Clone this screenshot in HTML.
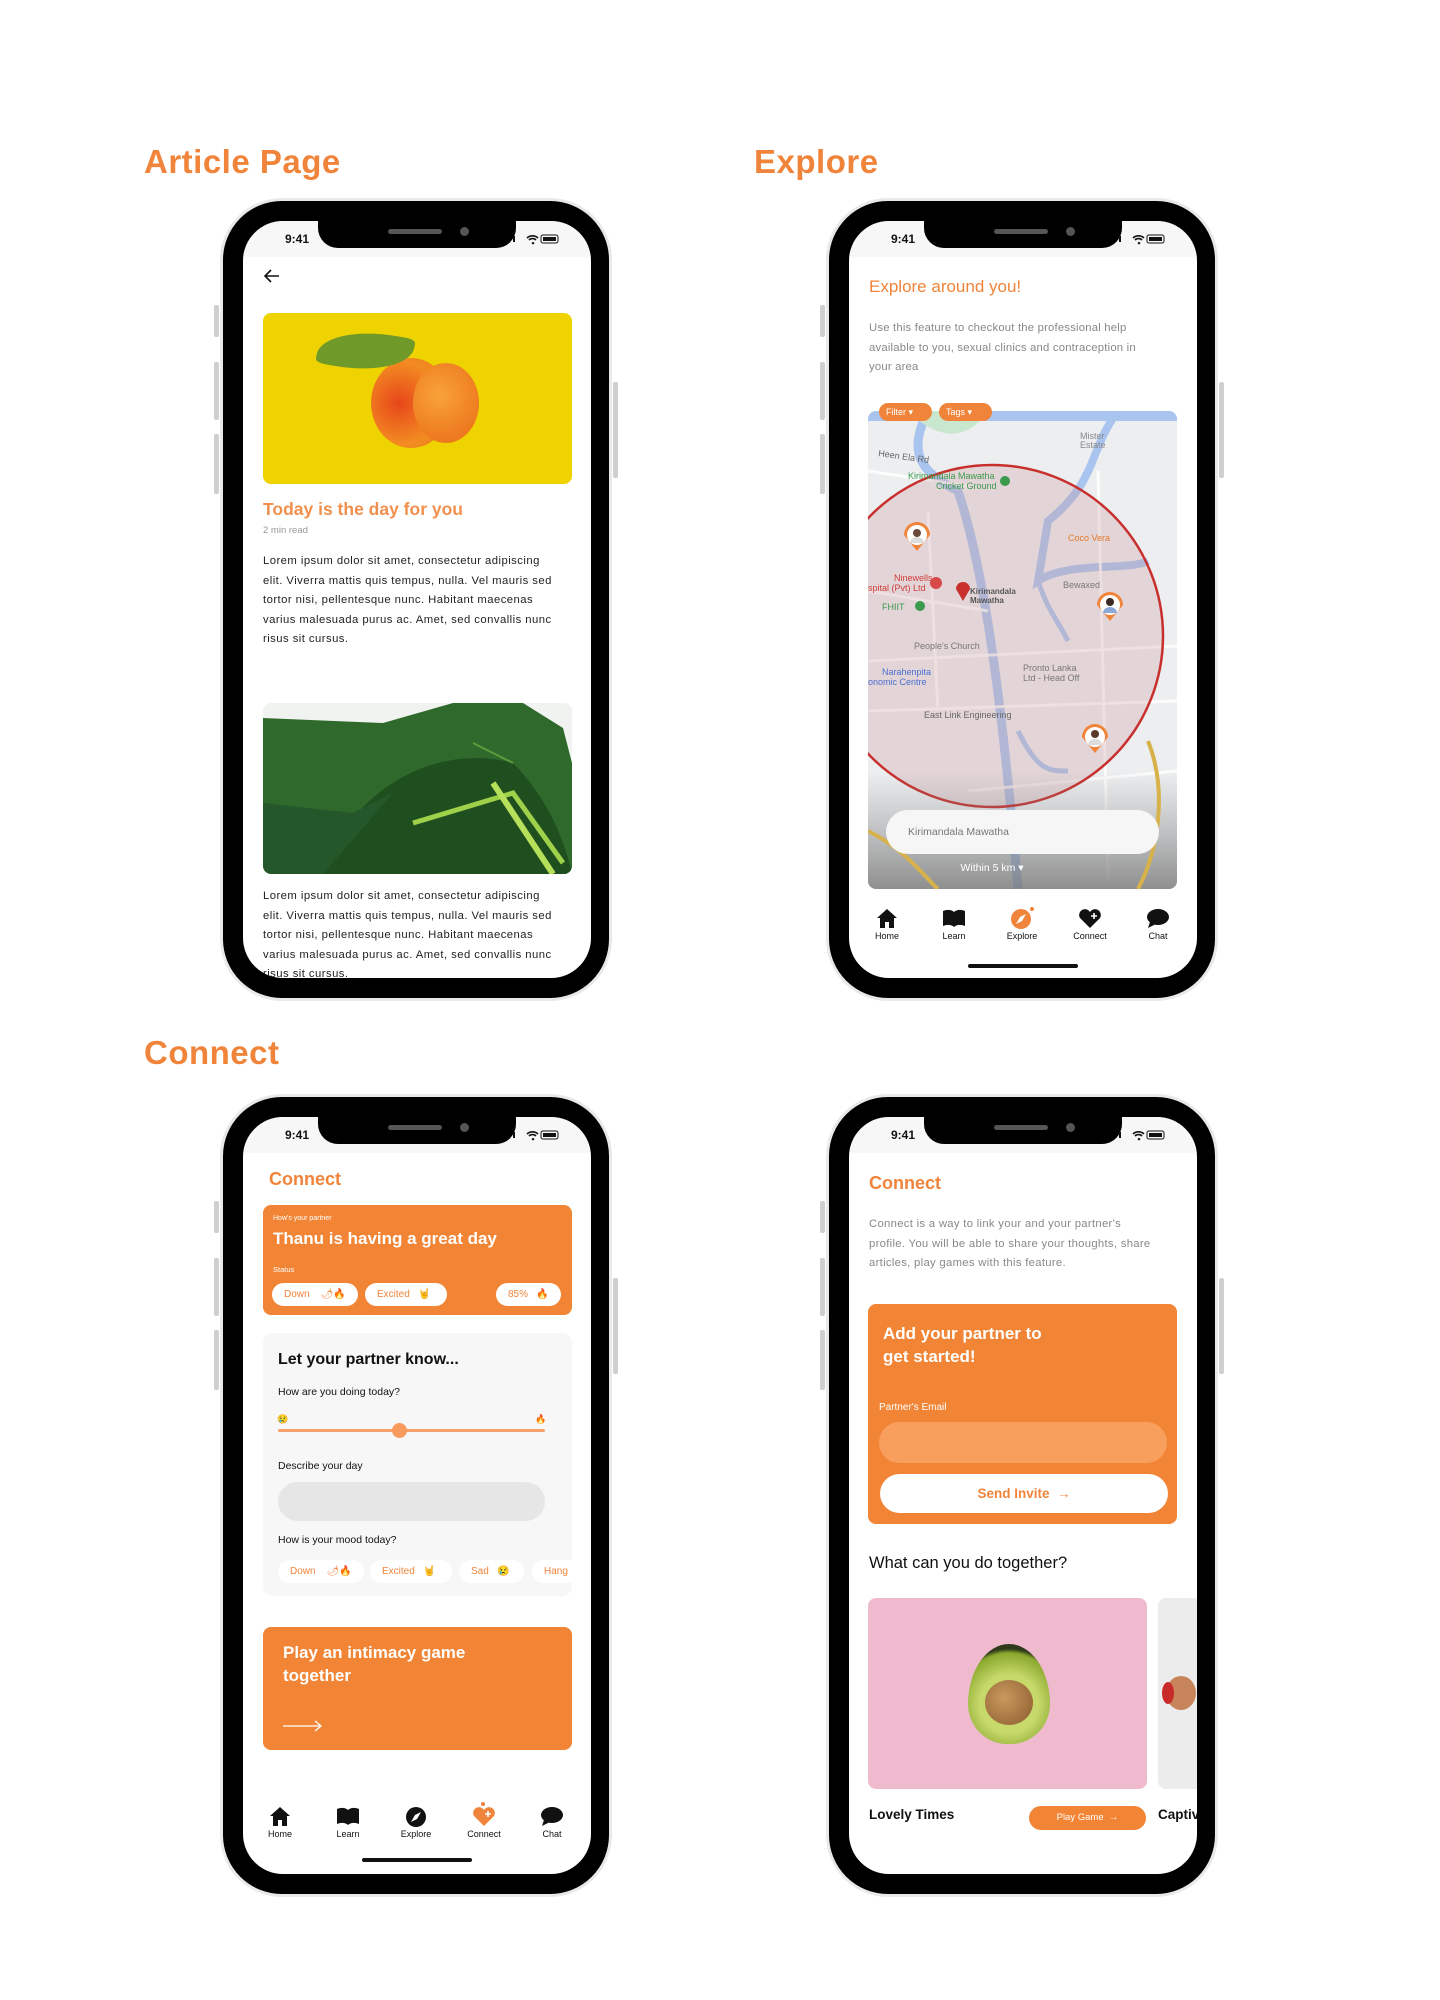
<!DOCTYPE html>
<html><head><meta charset="utf-8">
<style>
*{margin:0;padding:0;box-sizing:border-box}
body{width:1440px;height:2000px;background:#fff;position:relative;overflow:hidden;font-family:"Liberation Sans",sans-serif;color:#111}
.h{position:absolute;color:#F0843A;font-weight:700;font-size:33px;letter-spacing:0.5px}
.ph{position:absolute;width:392px;height:803px;border-radius:62px;background:#000;border:3px solid #e9e9e9}
.btn{position:absolute;background:#cfcfcf;width:5px;border-radius:2px}
.scr{position:absolute;width:348px;height:757px;border-radius:40px;background:#fff;overflow:hidden}
.sb{position:absolute;left:0;top:0;width:348px;height:36px;background:#f7f7f7}
.notch{position:absolute;left:75px;top:0;width:198px;height:27px;background:#000;border-radius:0 0 20px 20px}
.spk{position:absolute;left:70px;top:8px;width:54px;height:5px;border-radius:3px;background:#555}
.cam{position:absolute;left:142px;top:6px;width:9px;height:9px;border-radius:50%;background:#555}
.time{position:absolute;left:42px;top:11px;font-size:12px;font-weight:700}
.ab{position:absolute}
.or{color:#F0843A}
.p{font-size:11.3px;line-height:19.5px;color:#222;white-space:nowrap;letter-spacing:0.45px}
.tab{position:absolute;width:60px;text-align:center;font-size:9px;color:#111}
.tab svg{display:block;margin:0 auto 2px}
.hi{position:absolute;height:4px;background:#111;border-radius:2px}
.pill{position:absolute;background:#fff;border-radius:12px;color:#F0843A;font-size:10px;line-height:23px;padding-left:12px}
</style></head><body>

<div class="h" style="left:144px;top:143px">Article Page</div>
<div class="h" style="left:754px;top:143px">Explore</div>
<div class="h" style="left:144px;top:1034px">Connect</div>

<!-- PHONE 1 -->
<div class="btn" style="left:214px;top:305px;height:32px"></div>
<div class="btn" style="left:214px;top:362px;height:58px"></div>
<div class="btn" style="left:214px;top:434px;height:60px"></div>
<div class="btn" style="left:613px;top:382px;height:96px"></div>
<div class="ph" style="left:220px;top:198px"></div>
<div class="scr" style="left:243px;top:221px">
 <div class="sb"></div>
 <div class="time">9:41</div>
 <div class="notch"><div class="spk"></div><div class="cam"></div></div>
 <svg class="ab" style="left:270px;top:12px" width="50" height="12"><rect x="0" y="3" width="2" height="6" fill="#111"/><path d="M14 5a8 8 0 0 1 11 0M16 7a5 5 0 0 1 7 0M19 9.5l1 1 1-1" stroke="#111" stroke-width="1.6" fill="none"/><rect x="28" y="2" width="17" height="8" rx="2" stroke="#111" fill="none"/><rect x="30" y="4" width="13" height="4" fill="#111"/></svg>
 <svg class="ab" style="left:21px;top:48px" width="16" height="14"><path d="M15 7H2M7 1L1 7l6 6" stroke="#111" stroke-width="1.6" fill="none"/></svg>
 <div class="ab" style="left:20px;top:92px;width:309px;height:171px;background:#EED300;border-radius:8px;overflow:hidden">
  <div class="ab" style="left:108px;top:45px;width:80px;height:90px;border-radius:50%;background:radial-gradient(circle at 35% 50%,#e7461a,#f38b22 60%,#e57a1c)"></div>
  <div class="ab" style="left:150px;top:50px;width:66px;height:80px;border-radius:50%;background:radial-gradient(circle at 40% 40%,#f8a33a,#ee7a1f 70%)"></div>
  <div class="ab" style="left:55px;top:18px;width:95px;height:40px;background:#6f9a2a;border-radius:80% 10% 80% 10%;transform:rotate(10deg)"></div>
 </div>
 <div class="ab or" style="left:20px;top:278px;font-size:17.5px;font-weight:700;opacity:.9">Today is the day for you</div>
 <div class="ab" style="left:20px;top:304px;font-size:9.5px;color:#999">2 min read</div>
 <div class="ab p" style="left:20px;top:331px">Lorem ipsum dolor sit amet, consectetur adipiscing<br>elit. Viverra mattis quis tempus, nulla. Vel mauris sed<br>tortor nisi, pellentesque nunc. Habitant maecenas<br>varius malesuada purus ac. Amet, sed convallis nunc<br>risus sit cursus.</div>
 <div class="ab" style="left:20px;top:482px;width:309px;height:171px;background:#f1f3f1;border-radius:8px;overflow:hidden">
  <svg width="309" height="171"><path d="M0 15 L120 20 L190 0 L260 0 L300 25 L309 60 L309 171 L40 171 L0 160Z" fill="#2f6a2c"/><path d="M60 171 C90 80 180 40 250 60 C280 90 300 130 309 171Z" fill="#1f4f1f"/><path d="M0 100 L90 110 L130 90 L60 171 L0 171Z" fill="#24572a"/><path d="M150 120 L250 90 L300 160" stroke="#9fd04a" stroke-width="5" fill="none"/><path d="M230 80 L290 171" stroke="#b6e05a" stroke-width="6" fill="none"/><path d="M210 40 L250 60" stroke="#5c9a3a" stroke-width="2" fill="none"/></svg>
 </div>
 <div class="ab p" style="left:20px;top:666px">Lorem ipsum dolor sit amet, consectetur adipiscing<br>elit. Viverra mattis quis tempus, nulla. Vel mauris sed<br>tortor nisi, pellentesque nunc. Habitant maecenas<br>varius malesuada purus ac. Amet, sed convallis nunc<br>risus sit cursus.</div>
</div>

<!-- PHONE 2 -->
<div class="btn" style="left:820px;top:305px;height:32px"></div>
<div class="btn" style="left:820px;top:362px;height:58px"></div>
<div class="btn" style="left:820px;top:434px;height:60px"></div>
<div class="btn" style="left:1219px;top:382px;height:96px"></div>
<div class="ph" style="left:826px;top:198px"></div>
<div class="scr" style="left:849px;top:221px">
 <div class="sb"></div>
 <div class="time">9:41</div>
 <div class="notch"><div class="spk"></div><div class="cam"></div></div>
 <svg class="ab" style="left:270px;top:12px" width="50" height="12"><rect x="0" y="3" width="2" height="6" fill="#111"/><path d="M14 5a8 8 0 0 1 11 0M16 7a5 5 0 0 1 7 0M19 9.5l1 1 1-1" stroke="#111" stroke-width="1.6" fill="none"/><rect x="28" y="2" width="17" height="8" rx="2" stroke="#111" fill="none"/><rect x="30" y="4" width="13" height="4" fill="#111"/></svg>
 <div class="ab or" style="left:20px;top:56px;font-size:17px">Explore around you!</div>
 <div class="ab" style="left:20px;top:98px;font-size:11.3px;line-height:19.5px;color:#888;white-space:nowrap;letter-spacing:0.2px">Use this feature to checkout the professional help<br>available to you, sexual clinics and contraception in<br>your area</div>
 <div class="ab" style="left:19px;top:190px;width:309px;height:478px;border-radius:8px;overflow:hidden;background:#eceef0">
  <svg width="309" height="478" font-family="Liberation Sans" font-size="9">
   <path d="M60 0 C40 40 50 60 90 80 C110 140 130 240 150 478" stroke="#a9c4ef" stroke-width="9" fill="none"/>
   <path d="M150 0 L250 0 C220 40 230 70 180 110 L170 170 C200 150 260 160 280 150" stroke="#a9c4ef" stroke-width="8" fill="none"/>
   <path d="M0 0 H309 V10 H0Z" fill="#a9c4ef"/>
   <path d="M40 0 C70 30 100 30 120 0Z" fill="#c9e6cf"/>
   <path d="M170 170 C180 200 190 210 200 230 M150 320 C170 360 180 360 200 360" stroke="#a9c4ef" stroke-width="5" fill="none"/>
   <g stroke="#fff" stroke-width="3" fill="none" opacity=".8"><path d="M0 60 L100 75"/><path d="M0 250 L309 235"/><path d="M0 180 L120 200"/><path d="M60 100 L70 300"/><path d="M0 300 L309 290"/><path d="M230 60 L240 470"/><path d="M100 380 L309 360"/></g>
   <circle cx="124" cy="225" r="171" fill="rgba(205,150,150,0.28)" stroke="#c8302e" stroke-width="2.5"/>
   <rect x="0" y="360" width="309" height="118" fill="url(#g)"/>
   <defs><linearGradient id="g" x1="0" y1="0" x2="0" y2="1"><stop offset="0" stop-color="#888" stop-opacity="0"/><stop offset="1" stop-color="#777" stop-opacity=".8"/></linearGradient></defs>
   <path d="M0 420 C40 440 60 470 70 478 M280 330 C300 380 290 440 270 478" stroke="#d7b24a" stroke-width="4" fill="none"/>
   <text x="10" y="45" fill="#666" transform="rotate(8 10 45)">Heen Ela Rd</text>
   <text x="40" y="68" fill="#3b9a4c">Kirimandala Mawatha</text><text x="68" y="78" fill="#3b9a4c">Cricket Ground</text>
   <circle cx="137" cy="70" r="5" fill="#3b9a4c"/>
   <text x="212" y="28" fill="#888">Mister</text><text x="212" y="37" fill="#888">Estate</text>
   <text x="200" y="130" fill="#e07a2a">Coco Vera</text>
   <text x="26" y="170" fill="#d03b3b">Ninewells</text><text x="0" y="180" fill="#d03b3b">spital (Pvt) Ltd</text>
   <circle cx="68" cy="172" r="6" fill="#d84a4a"/>
   <path d="M88 178 a7 7 0 1 1 14 0 l-7 12z" fill="#c8302e"/>
   <text x="102" y="183" fill="#555" font-weight="bold" font-size="8">Kirimandala</text><text x="102" y="192" fill="#555" font-weight="bold" font-size="8">Mawatha</text>
   <text x="14" y="199" fill="#3b9a4c">FHIIT</text><circle cx="52" cy="195" r="5" fill="#3b9a4c"/>
   <text x="46" y="238" fill="#777">People's Church</text>
   <text x="14" y="264" fill="#4a6fd0">Narahenpita</text><text x="0" y="274" fill="#4a6fd0">onomic Centre</text>
   <text x="155" y="260" fill="#777">Pronto Lanka</text><text x="155" y="270" fill="#777">Ltd - Head Off</text>
   <text x="195" y="177" fill="#777">Bewaxed</text>
   <text x="56" y="307" fill="#666">East Link Engineering</text>
   <g><path d="M36 124 a13 13 0 1 1 26 0 l-13 16z" fill="#F0843A"/><circle cx="49" cy="124" r="10" fill="#fff"/><circle cx="49" cy="122" r="4" fill="#6b4a3a"/><path d="M42 132 a7 6 0 0 1 14 0z" fill="#ddd"/></g>
   <g><path d="M229 194 a13 13 0 1 1 26 0 l-13 16z" fill="#F0843A"/><circle cx="242" cy="194" r="10" fill="#fff"/><circle cx="242" cy="191" r="4" fill="#3a2a22"/><path d="M235 202 a7 6 0 0 1 14 0z" fill="#8aa8d8"/></g>
   <g><path d="M214 326 a13 13 0 1 1 26 0 l-13 16z" fill="#F0843A"/><circle cx="227" cy="326" r="10" fill="#fff"/><circle cx="227" cy="323" r="4" fill="#5a3a2a"/><path d="M220 334 a7 6 0 0 1 14 0z" fill="#ddd"/></g>
  </svg>
  <div class="ab" style="left:18px;top:399px;width:273px;height:44px;background:#f6f6f6;border-radius:22px;font-size:10.5px;color:#777;line-height:44px;padding-left:22px">Kirimandala Mawatha</div>
  <div class="ab" style="left:0;top:451px;width:248px;text-align:center;font-size:10.5px;color:#fff">Within 5 km ▾</div>
 </div>
 <div class="ab" style="left:30px;top:182px;width:53px;height:18px;background:#F0843A;border-radius:9px;color:#fff;font-size:9px;line-height:18px;padding-left:7px">Filter ▾</div>
 <div class="ab" style="left:90px;top:182px;width:53px;height:18px;background:#F0843A;border-radius:9px;color:#fff;font-size:9px;line-height:18px;padding-left:7px">Tags ▾</div>
 <div class="tab" style="left:8px;top:686px"><svg width="26" height="22"><path d="M3 11 L13 2 L23 11 H20 V21 H15 V15 H11 V21 H6 V11Z" fill="#111"/></svg>Home</div>
 <div class="tab" style="left:75px;top:686px"><svg width="26" height="22"><path d="M2 4 C7 2 11 3 13 5 C15 3 19 2 24 4 V19 C19 17 15 18 13 20 C11 18 7 17 2 19Z" fill="#111"/></svg>Learn</div>
 <div class="tab or" style="left:143px;top:686px"><svg width="26" height="22"><circle cx="12" cy="12" r="10" fill="#F0843A"/><path d="M7 17 L11 10 L17 7 L13 14Z" fill="#fff"/><circle cx="23" cy="2" r="2" fill="#F0843A"/></svg>Explore</div>
 <div class="tab" style="left:211px;top:686px"><svg width="26" height="22"><path d="M13 21 L3 11 A5 5 0 0 1 13 5 A5 5 0 0 1 23 11Z" fill="#111"/><path d="M17 6v6M14 9h6" stroke="#fff" stroke-width="1.6"/></svg>Connect</div>
 <div class="tab" style="left:279px;top:686px"><svg width="26" height="22"><ellipse cx="13" cy="10" rx="11" ry="8" fill="#111"/><path d="M5 15 L3 21 L11 17Z" fill="#111"/></svg>Chat</div>
 <div class="hi" style="left:119px;top:743px;width:110px"></div>
</div>

<!-- PHONE 3 -->
<div class="btn" style="left:214px;top:1201px;height:32px"></div>
<div class="btn" style="left:214px;top:1258px;height:58px"></div>
<div class="btn" style="left:214px;top:1330px;height:60px"></div>
<div class="btn" style="left:613px;top:1278px;height:96px"></div>
<div class="ph" style="left:220px;top:1094px"></div>
<div class="scr" style="left:243px;top:1117px">
 <div class="sb"></div>
 <div class="time">9:41</div>
 <div class="notch"><div class="spk"></div><div class="cam"></div></div>
 <svg class="ab" style="left:270px;top:12px" width="50" height="12"><rect x="0" y="3" width="2" height="6" fill="#111"/><path d="M14 5a8 8 0 0 1 11 0M16 7a5 5 0 0 1 7 0M19 9.5l1 1 1-1" stroke="#111" stroke-width="1.6" fill="none"/><rect x="28" y="2" width="17" height="8" rx="2" stroke="#111" fill="none"/><rect x="30" y="4" width="13" height="4" fill="#111"/></svg>
 <div class="ab or" style="left:26px;top:52px;font-size:18px;font-weight:700">Connect</div>
 <div class="ab" style="left:20px;top:88px;width:309px;height:110px;background:#F18535;border-radius:8px;color:#fff">
  <div class="ab" style="left:10px;top:10px;font-size:7px">How's your partner</div>
  <div class="ab" style="left:10px;top:24px;font-size:17px;font-weight:700">Thanu is having a great day</div>
  <div class="ab" style="left:10px;top:60px;font-size:7.5px">Status</div>
  <div class="pill" style="left:9px;top:78px;width:86px">Down &nbsp;&nbsp;&nbsp;🌶🔥</div>
  <div class="pill" style="left:102px;top:78px;width:82px">Excited &nbsp;&nbsp;🤘</div>
  <div class="pill" style="left:233px;top:78px;width:65px">85% &nbsp;&nbsp;🔥</div>
 </div>
 <div class="ab" style="left:20px;top:216px;width:309px;height:263px;background:#f7f7f7;border-radius:10px">
  <div class="ab" style="left:15px;top:18px;font-size:16px;font-weight:700">Let your partner know...</div>
  <div class="ab" style="left:15px;top:53px;font-size:10.5px">How are you doing today?</div>
  <div class="ab" style="left:14px;top:81px;font-size:9px">😢</div>
  <div class="ab" style="left:272px;top:81px;font-size:9px">🔥</div>
  <div class="ab" style="left:15px;top:96px;width:267px;height:3px;background:#F7A06A;border-radius:2px"></div>
  <div class="ab" style="left:129px;top:90px;width:15px;height:15px;background:#F79A5C;border-radius:50%"></div>
  <div class="ab" style="left:15px;top:127px;font-size:10.5px">Describe your day</div>
  <div class="ab" style="left:15px;top:149px;width:267px;height:39px;background:#e6e6e6;border-radius:20px"></div>
  <div class="ab" style="left:15px;top:201px;font-size:10.5px">How is your mood today?</div>
  <div class="pill" style="left:15px;top:227px;width:86px">Down &nbsp;&nbsp;&nbsp;🌶🔥</div>
  <div class="pill" style="left:107px;top:227px;width:82px">Excited &nbsp;&nbsp;🤘</div>
  <div class="pill" style="left:196px;top:227px;width:65px">Sad &nbsp;&nbsp;😢</div>
  <div class="pill" style="left:269px;top:227px;width:60px;border-radius:12px 0 0 12px">Hang</div>
 </div>
 <div class="ab" style="left:20px;top:510px;width:309px;height:123px;background:#F18535;border-radius:8px;color:#fff">
  <div class="ab" style="left:20px;top:14px;font-size:17px;font-weight:700;line-height:23px">Play an intimacy game<br>together</div>
  <svg class="ab" style="left:20px;top:93px" width="40" height="12"><path d="M0 6H38M32 1l6 5-6 5" stroke="#fff" stroke-width="1.3" fill="none"/></svg>
 </div>
 <div class="tab" style="left:7px;top:688px"><svg width="26" height="22"><path d="M3 11 L13 2 L23 11 H20 V21 H15 V15 H11 V21 H6 V11Z" fill="#111"/></svg>Home</div>
 <div class="tab" style="left:75px;top:688px"><svg width="26" height="22"><path d="M2 4 C7 2 11 3 13 5 C15 3 19 2 24 4 V19 C19 17 15 18 13 20 C11 18 7 17 2 19Z" fill="#111"/></svg>Learn</div>
 <div class="tab" style="left:143px;top:688px"><svg width="26" height="22"><circle cx="13" cy="12" r="10" fill="#111"/><path d="M8 17 L12 10 L18 7 L14 14Z" fill="#fff"/></svg>Explore</div>
 <div class="tab or" style="left:211px;top:684px"><svg width="26" height="26"><circle cx="12" cy="3" r="2" fill="#F0843A"/><path d="M13 25 L3 15 A5 5 0 0 1 13 9 A5 5 0 0 1 23 15Z" fill="#F0843A"/><path d="M17 10v6M14 13h6" stroke="#fff" stroke-width="1.6"/></svg>Connect</div>
 <div class="tab" style="left:279px;top:688px"><svg width="26" height="22"><ellipse cx="13" cy="10" rx="11" ry="8" fill="#111"/><path d="M5 15 L3 21 L11 17Z" fill="#111"/></svg>Chat</div>
 <div class="hi" style="left:119px;top:741px;width:110px"></div>
</div>

<!-- PHONE 4 -->
<div class="btn" style="left:820px;top:1201px;height:32px"></div>
<div class="btn" style="left:820px;top:1258px;height:58px"></div>
<div class="btn" style="left:820px;top:1330px;height:60px"></div>
<div class="btn" style="left:1219px;top:1278px;height:96px"></div>
<div class="ph" style="left:826px;top:1094px"></div>
<div class="scr" style="left:849px;top:1117px">
 <div class="sb"></div>
 <div class="time">9:41</div>
 <div class="notch"><div class="spk"></div><div class="cam"></div></div>
 <svg class="ab" style="left:270px;top:12px" width="50" height="12"><rect x="0" y="3" width="2" height="6" fill="#111"/><path d="M14 5a8 8 0 0 1 11 0M16 7a5 5 0 0 1 7 0M19 9.5l1 1 1-1" stroke="#111" stroke-width="1.6" fill="none"/><rect x="28" y="2" width="17" height="8" rx="2" stroke="#111" fill="none"/><rect x="30" y="4" width="13" height="4" fill="#111"/></svg>
 <div class="ab or" style="left:20px;top:56px;font-size:18px;font-weight:700">Connect</div>
 <div class="ab" style="left:20px;top:98px;font-size:11.3px;line-height:19.5px;color:#888;white-space:nowrap;letter-spacing:0.3px">Connect is a way to link your and your partner's<br>profile. You will be able to share your thoughts, share<br>articles, play games with this feature.</div>
 <div class="ab" style="left:19px;top:187px;width:309px;height:220px;background:#F18535;border-radius:8px;color:#fff">
  <div class="ab" style="left:15px;top:18px;font-size:17px;font-weight:700;line-height:23px">Add your partner to<br>get started!</div>
  <div class="ab" style="left:11px;top:98px;font-size:10px">Partner's Email</div>
  <div class="ab" style="left:11px;top:118px;width:288px;height:41px;background:#F99F5E;border-radius:21px"></div>
  <div class="ab" style="left:12px;top:170px;width:288px;height:39px;background:#fff;border-radius:20px;color:#F0843A;font-size:13.5px;font-weight:700;text-align:center;line-height:39px">Send Invite &nbsp;→</div>
 </div>
 <div class="ab" style="left:20px;top:437px;font-size:16.5px">What can you do together?</div>
 <div class="ab" style="left:19px;top:481px;width:279px;height:191px;background:#F0BACE;border-radius:8px;overflow:hidden">
  <div class="ab" style="left:100px;top:46px;width:82px;height:100px;border-radius:50% 50% 48% 48%/60% 60% 40% 40%;background:radial-gradient(circle at 50% 60%,#c7d96b 40%,#8aa82e 70%,#2f3a1a 76%)"></div>
  <div class="ab" style="left:117px;top:82px;width:48px;height:45px;border-radius:50%;background:radial-gradient(circle at 40% 40%,#c89a5e,#8a5a2c)"></div>
 </div>
 <div class="ab" style="left:309px;top:481px;width:60px;height:191px;background:#ececec;border-radius:8px;overflow:hidden">
  <div class="ab" style="left:8px;top:78px;width:30px;height:34px;border-radius:50%;background:#c7845a"></div>
  <div class="ab" style="left:4px;top:84px;width:12px;height:22px;border-radius:50%;background:#c82a2a"></div>
 </div>
 <div class="ab" style="left:20px;top:690px;font-size:13.5px;font-weight:700">Lovely Times</div>
 <div class="ab" style="left:180px;top:689px;width:117px;height:24px;background:#F18535;border-radius:12px;color:#fff;font-size:9.5px;text-align:center;line-height:24px">Play Game &nbsp;→</div>
 <div class="ab" style="left:309px;top:690px;font-size:13.5px;font-weight:700">Captiv</div>
</div>

</body></html>
